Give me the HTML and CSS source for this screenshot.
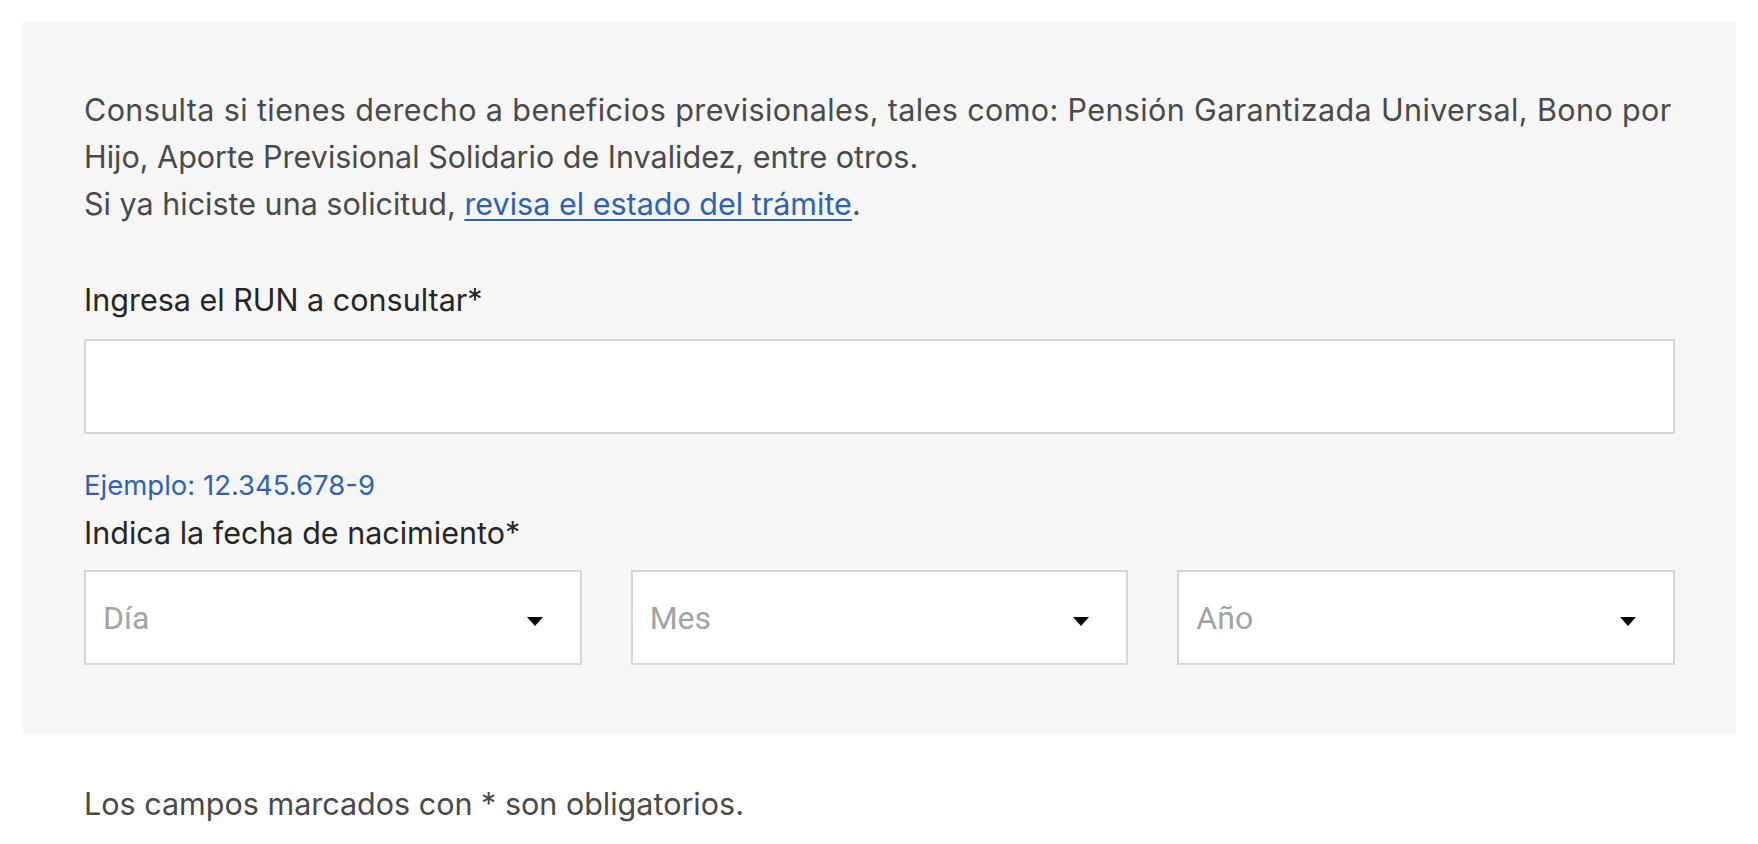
FILE: index.html
```html
<!DOCTYPE html>
<html lang="es">
<head>
    <meta charset="UTF-8">
    <meta name="viewport" content="width=device-width, initial-scale=1.0">
    <title>Beneficios previsionales</title>
    <link rel="stylesheet" href="styles.css">
</head>
<body>
    <main class="page">
        <section class="panel">
            <p class="intro">
                <span class="intro-wide">Consulta si tienes derecho a beneficios previsionales, tales como: Pensión Garantizada Universal, Bono por</span><br>
                Hijo, Aporte Previsional Solidario de Invalidez, entre otros.<br>
                Si ya hiciste una solicitud, <a href="#">revisa el estado del trámite</a>.
            </p>

            <label class="field-label" for="run">Ingresa el RUN a consultar*</label>
            <input type="text" id="run" class="text-input">
            <p class="hint">Ejemplo: 12.345.678-9</p>

            <label class="field-label date-label" for="dia">Indica la fecha de nacimiento*</label>
            <div class="date-row">
                <div class="select-wrap">
                    <select id="dia">
                        <option value="" selected>Día</option>
                    </select>
                </div>
                <div class="select-wrap">
                    <select id="mes">
                        <option value="" selected>Mes</option>
                    </select>
                </div>
                <div class="select-wrap">
                    <select id="anio">
                        <option value="" selected>Año</option>
                    </select>
                </div>
            </div>
        </section>

        <p class="note">Los campos marcados con * son obligatorios.</p>
    </main>
</body>
</html>
```

FILE: styles.css
```css
:root {
    --panel-color: #f6f6f6;
    --text-color: #4a4a4a;
    --label-color: #262626;
    --link-color: #2f62b5;
    --border-color: #d6d6d6;
}

body {
    font-family: Inter, "Noto Sans", sans-serif;
    color: var(--text-color);
    background: white;
    margin: 0;
    padding: 0;
}

.page {
    padding: 22px 22px 0;
}

.panel {
    background-color: var(--panel-color);
    padding: 64px 61px 69px 62px;
}

.intro {
    margin: 0 0 49px;
    font-size: 30.5px;
    line-height: 47px;
    white-space: nowrap;
}

/* first line of the intro is set a bit wider in the original */
.intro-wide {
    letter-spacing: 0.38px;
}

.intro a {
    color: var(--link-color);
    text-underline-offset: 4px;
    text-decoration-thickness: 2px;
}

.field-label {
    display: block;
    font-size: 30.5px;
    line-height: 47px;
    color: var(--label-color);
}

.text-input {
    display: block;
    box-sizing: border-box;
    width: 100%;
    height: 95px;
    margin-top: 16px;
    border: 2px solid var(--border-color);
    background: white;
    font-size: 30px;
    padding: 0 20px;
}

.hint {
    margin: 34px 0 0;
    font-size: 27.5px;
    line-height: 34px;
    color: var(--link-color);
}

.date-label {
    margin-top: 7px;
}

.date-row {
    display: grid;
    grid-template-columns: repeat(3, 1fr);
    gap: 49px;
    margin-top: 14px;
}

.select-wrap {
    position: relative;
}

.select-wrap::after {
    content: "";
    position: absolute;
    right: 39px;
    top: 47px;
    border-left: 8px solid transparent;
    border-right: 8px solid transparent;
    border-top: 9px solid #000;
    pointer-events: none;
}

select {
    appearance: none;
    -webkit-appearance: none;
    display: block;
    box-sizing: border-box;
    width: 100%;
    height: 95px;
    border: 2px solid var(--border-color);
    border-radius: 0;
    background: white;
    padding: 0 17px;
    font-family: Roboto, sans-serif;
    font-size: 32px;
    color: #a3a3a3;
}

.note {
    margin: 46px 0 0 62px;
    font-size: 30.5px;
    line-height: 47px;
}
```
